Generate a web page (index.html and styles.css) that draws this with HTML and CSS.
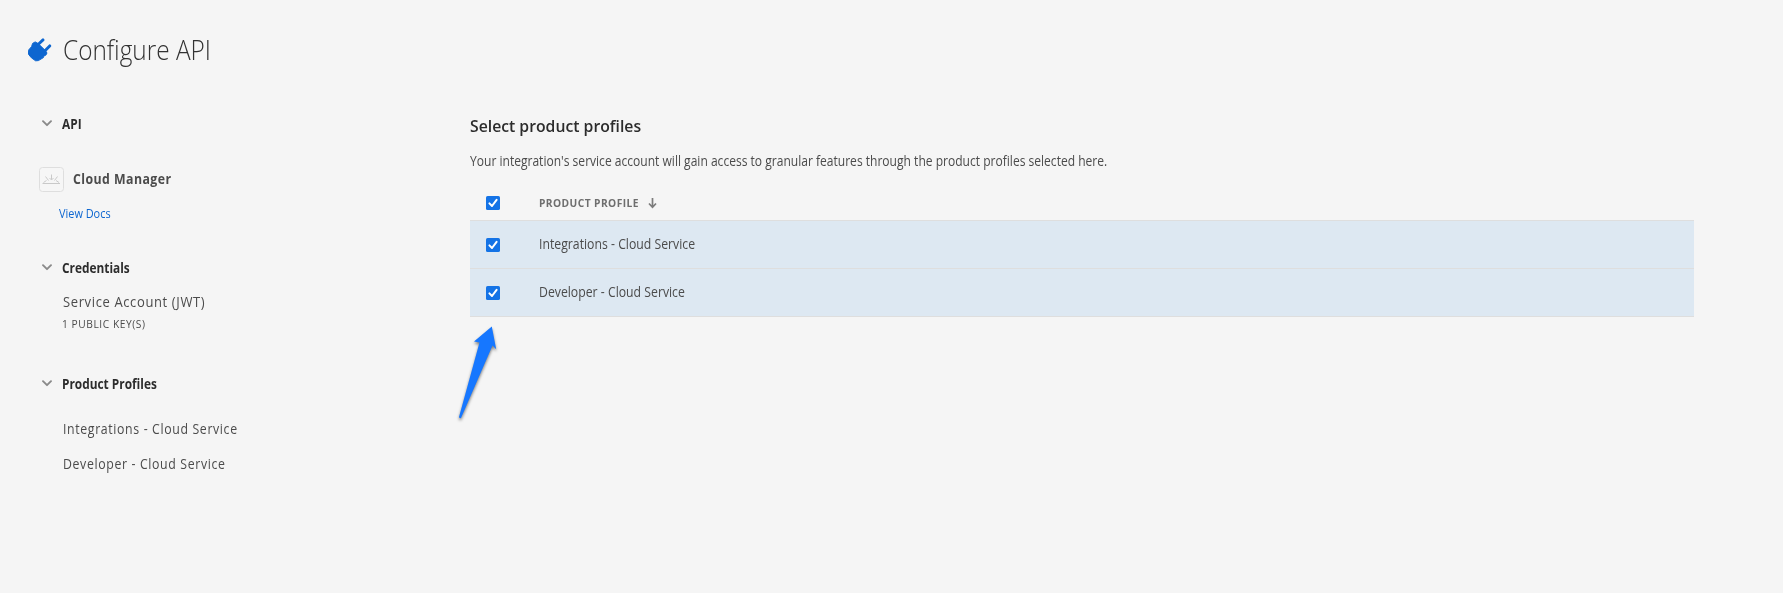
FILE: index.html
```html
<!DOCTYPE html>
<html lang="en">
<head>
<meta charset="utf-8">
<title>Configure API</title>
<link rel="stylesheet" href="styles.css">
</head>
<body>
<svg class="defs" width="0" height="0" aria-hidden="true">
  <symbol id="chevron" viewBox="0 0 10 7"><path d="M1 1.2 5 5.2 9 1.2" fill="none" stroke="#8a8a8a" stroke-width="1.9" stroke-linecap="round" stroke-linejoin="round"/></symbol>
  <symbol id="check" viewBox="0 0 14 14"><rect width="14" height="14" rx="1.6" fill="#1473e6"/><path d="M3.4 7.4 6 10 10.6 3.9" fill="none" stroke="#fff" stroke-width="2" stroke-linecap="round" stroke-linejoin="round"/></symbol>
</svg>
<header class="page-header">
  <svg class="plug" width="24" height="24" viewBox="0 0 24 24"><path d="M4.6 5.4 7.2 3.9 10.2 5.6 17.2 12.4 19 15 17.8 17.2 16.2 17.6 15.4 19.6 10.4 22.6 7.6 22.8 3.4 19.8.6 16.4.3 12.4 3.6 8.6Z" fill="#0d66d0" stroke="#0d66d0" stroke-linejoin="round"/><path d="M10.4 6.2 15 1.9M17 12.8 21.7 7.9" stroke="#0d66d0" stroke-width="2.9" stroke-linecap="round"/></svg>
  <h1 class="title">Configure API</h1>
</header>
<div class="layout">
  <nav class="sidebar">
    <h2 class="section"><svg class="chev" width="10" height="7"><use href="#chevron"/></svg><span>API</span></h2>
    <div class="product">
      <svg width="25" height="25" viewBox="0 0 25 25"><rect x=".5" y=".5" width="24" height="24" rx="3" fill="#f6f6f6" stroke="#dedede"/><path d="M3.5 16.5h17.5M12.5 7.5v5M6.5 9.5l3 4M18.5 9.5l-3 4M4.5 15.5l3-2M20 15.5l-3-2M10.5 11l2 2 2-2" fill="none" stroke="#c4c4c4" stroke-width=".9"/></svg>
      <span class="product-name">Cloud Manager</span>
    </div>
    <a class="docs">View Docs</a>
    <h2 class="section credentials"><svg class="chev" width="10" height="7"><use href="#chevron"/></svg><span>Credentials</span></h2>
    <div class="item account">Service Account (JWT)</div>
    <div class="keys">1 PUBLIC KEY(S)</div>
    <h2 class="section profiles"><svg class="chev" width="10" height="7"><use href="#chevron"/></svg><span>Product Profiles</span></h2>
    <div class="item first-profile">Integrations - Cloud Service</div>
    <div class="item second-profile">Developer - Cloud Service</div>
  </nav>
  <main class="main">
    <h2 class="main-title">Select product profiles</h2>
    <p class="intro">Your integration's service account will gain access to granular features through the product profiles selected here.</p>
    <div class="table">
      <div class="thead"><svg class="box" width="14" height="14"><use href="#check"/></svg><span class="th">PRODUCT PROFILE</span><svg class="sort" width="10" height="12" viewBox="0 0 10 12"><path d="M4.5 1v9M1 6.5l3.5 3.8L8 6.5" fill="none" stroke="#7c7c7c" stroke-width="1.7"/></svg></div>
      <div class="row"><svg class="box" width="14" height="14"><use href="#check"/></svg><span>Integrations - Cloud Service</span></div>
      <div class="row"><svg class="box" width="14" height="14"><use href="#check"/></svg><span>Developer - Cloud Service</span></div>
    </div>
  </main>
</div>
<svg class="pointer" width="60" height="110" viewBox="0 0 60 110"><path d="M41.8 6.5 24 21.5 29.5 22.5 9 97Q9.2 98.6 11 98L42.5 25.5 46.2 29.2Z" fill="#1677ff"/></svg>
</body>
</html>
```

FILE: styles.css
```css
body {
  margin: 0;
  background: #f5f5f5;
  color: #4b4b4b;
  font: 14px/20px "Open Sans", sans-serif;
  white-space: nowrap;
}
h1, h2, p { margin: 0; }
svg { display: block; flex: none; }
.defs { position: absolute; }

/* Narrowed text grows from its left edge */
.title, .section span, .product-name, .docs, .item, .keys,
.main-title, .intro, .th, .row span { transform-origin: left center; }

.page-header { display: flex; padding: 30px 0 0 28px; height: 40px; }
.plug { margin-top: 8px; }
.title {
  margin-left: 10.5px;
  color: #323232;
  font-size: 27px;
  line-height: 40px;
  font-weight: 300;
  transform: scaleX(.903);
}

.layout { display: flex; padding-top: 43px; }
.sidebar { width: 469.5px; padding-top: 1px; flex: none; }
.section {
  display: flex;
  padding-left: 42px;
  color: #2c2c2c;
  font-size: 14px;
  line-height: 20px;
  font-weight: 700;
}
.section span { transform: scaleX(.848); }
.chev { margin: 6px 10px 0 0; }
.product { display: flex; padding: 33px 0 0 39px; }
.product-name {
  margin: 2px 0 0 9px;
  font-weight: 700;
  letter-spacing: .5px;
  transform: scaleX(.88);
}
.docs {
  display: block;
  margin: 14px 0 0 59px;
  color: #0d66d0;
  font-size: 12px;
  line-height: 16px;
  transform: scaleX(.91);
}
.credentials { margin-top: 36px; }
.item { margin-left: 62.5px; letter-spacing: .72px; transform: scaleX(.88); }
.account { margin-top: 14px; letter-spacing: .66px; transform: scaleX(.93); }
.keys {
  margin: 4px 0 0 62px;
  font-size: 11px;
  line-height: 16px;
  letter-spacing: .59px;
  transform: scaleX(.93);
}
.profiles { margin-top: 42px; }
.first-profile { margin-top: 25px; }
.second-profile { margin-top: 15px; }

.main { width: 1224px; margin-left: .5px; }
.main-title {
  margin-left: -.5px;
  color: #2c2c2c;
  font-size: 17px;
  line-height: 26px;
  font-weight: 600;
  transform: scaleX(.927);
}
.intro { margin: 12px 0 0 -.5px; transform: scaleX(.861); }
.table { margin-top: 19px; border-bottom: 1px solid #dedede; }
.thead, .row { display: flex; align-items: flex-start; padding-left: 16px; }
.thead { height: 25px; padding-top: 5px; }
.thead .box { margin-top: 1px; }
.th {
  width: 100px;
  margin-left: 39px;
  color: #6e6e6e;
  font-size: 11px;
  line-height: 16px;
  font-weight: 700;
  letter-spacing: .45px;
  transform: scaleX(.93);
}
.sort { margin: 2px 0 0 9px; }
.row {
  height: 47px;
  border-top: 1px solid #dedede;
  background: #dde8f2;
}
.row .box { margin-top: 17px; }
.row span { margin: 13px 0 0 39.2px; transform: scaleX(.875); }

.pointer {
  position: absolute;
  left: 450px;
  top: 320px;
  filter: drop-shadow(0 2px 1.5px rgba(0, 0, 0, .5));
}
```
